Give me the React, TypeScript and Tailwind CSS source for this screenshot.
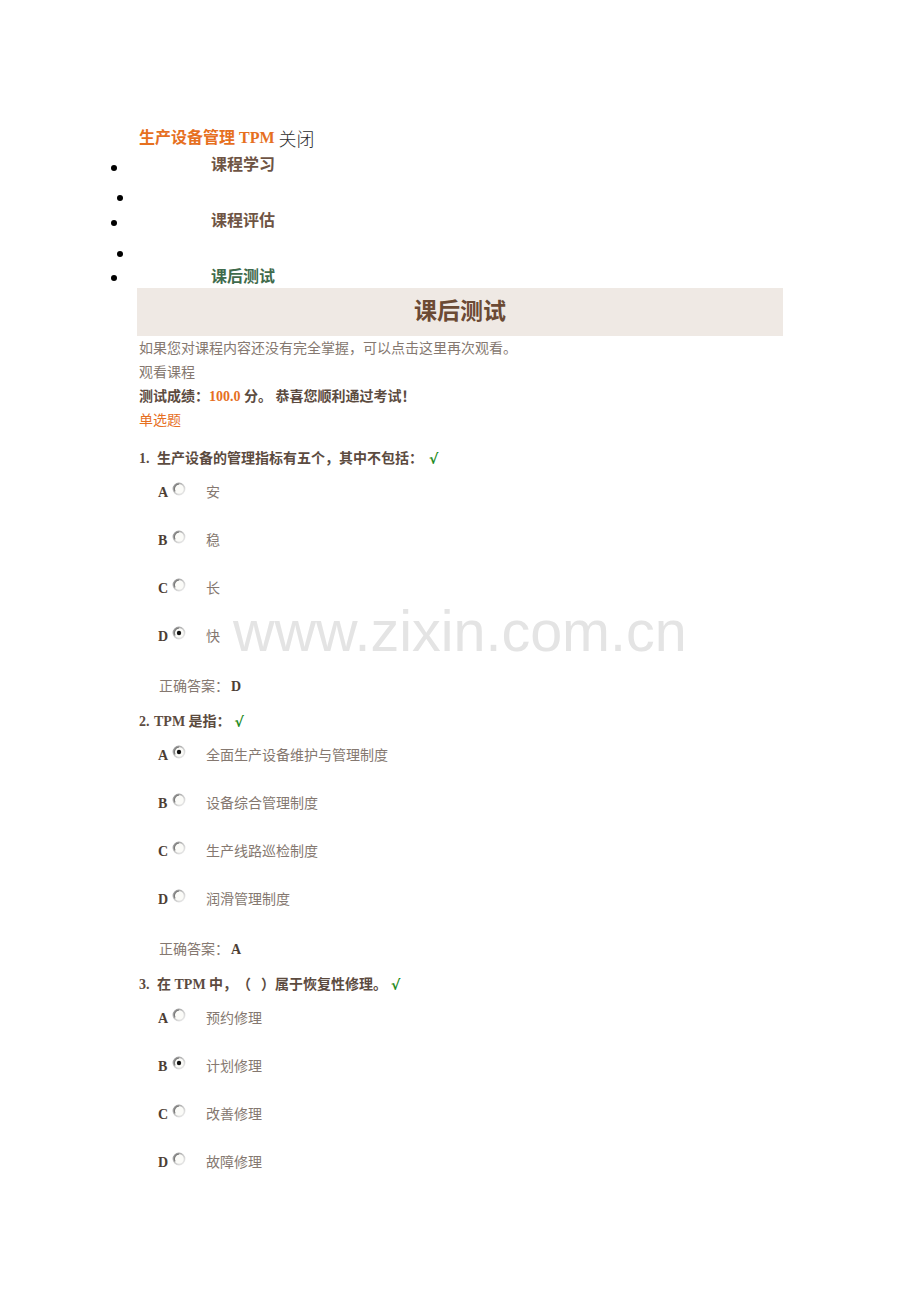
import React from "react";

const serif = { fontFamily: '"Liberation Serif", "Noto Sans CJK SC", serif' };

function Radio({ checked }: { checked?: boolean }) {
  return (
    <svg width="14" height="14" viewBox="0 0 14 14" className="shrink-0">
      <defs>
        <linearGradient id={checked ? "rg1" : "rg0"} x1="0" y1="0" x2="1" y2="1">
          <stop offset="0" stopColor="#8a8a8a" />
          <stop offset="0.5" stopColor="#c8c8c8" />
          <stop offset="1" stopColor="#f0f0f0" />
        </linearGradient>
      </defs>
      <circle cx="7" cy="7" r="5.6" fill="#fbfbf8" stroke={`url(#${checked ? "rg1" : "rg0"})`} strokeWidth="1.6" />
      <path d="M3 9.5 A5 5 0 0 1 7 2" fill="none" stroke="#7a7a7a" strokeWidth="1.2" />
      {checked && <circle cx="7" cy="7" r="2.2" fill="#111" />}
    </svg>
  );
}

type Q = { num: string; numW: string; text: React.ReactNode; options: string[]; checked: number; answer?: string; checkMl: string };

const questions: Q[] = [
  {
    num: "1. ",
    numW: "w-[18px]",
    text: "生产设备的管理指标有五个，其中不包括：",
    options: ["安", "稳", "长", "快"],
    checked: 3,
    answer: "D",
    checkMl: "ml-[6px]",
  },
  {
    num: "2.",
    numW: "w-[15px]",
    text: "TPM 是指：",
    options: ["全面生产设备维护与管理制度", "设备综合管理制度", "生产线路巡检制度", "润滑管理制度"],
    checked: 0,
    answer: "A",
    checkMl: "ml-[4px]",
  },
  {
    num: "3. ",
    numW: "w-[18px]",
    text: (
      <>
        在 TPM 中，<span className="inline-block w-[14px]">（</span>
        <span className="inline-block w-[10px]" />
        <span className="inline-block w-[14px]">）</span>属于恢复性修理。
      </>
    ),
    options: ["预约修理", "计划修理", "改善修理", "故障修理"],
    checked: 1,
    checkMl: "ml-[4px]",
  },
];

const letters = ["A", "B", "C", "D"];

function Question({ q, first }: { q: Q; first?: boolean }) {
  return (
    <div className={first ? "mt-[14px]" : "mt-[11px]"}>
      <div className="h-[24px] leading-[24px] text-[14px] font-bold text-[#5c4b3f] flex items-center">
        <span className={q.numW}>{q.num}</span>
        <span>{q.text}</span>
        <span
          className={`${q.checkMl} text-[#1f8c24] font-bold text-[14px]`}
          style={{ fontFamily: '"DejaVu Sans", sans-serif' }}
        >
          √
        </span>
      </div>
      <div className="mt-[9px] flex flex-col gap-[24px] pl-[19px]">
        {q.options.map((o, i) => (
          <div key={i} className="h-[24px] flex items-center text-[14px]">
            <span className="w-[14px] font-bold text-[#4d3e34] text-[14px]">{letters[i]}</span>
            <span className="-mt-[6px]">
              <Radio checked={q.checked === i} />
            </span>
            <span className="ml-[20px] text-[#857870]">{o}</span>
          </div>
        ))}
      </div>
      {q.answer && (
        <div className="mt-[27px] h-[24px] leading-[24px] pl-[20px] text-[14px] text-[#857870]">
          正确答案：<span className="ml-[2px] font-bold text-[#4d3e34] text-[14px]">{q.answer}</span>
        </div>
      )}
    </div>
  );
}

export default function App() {
  return (
    <div className="relative w-[920px] h-[1302px] bg-white overflow-hidden" style={serif}>
      <div className="pt-[128px]">
        <div className="pl-[139px] h-[20px] leading-[20px] flex items-end">
          <span className="text-[16px] font-bold text-[#e6701f]">生产设备管理 TPM</span>
          <span className="ml-[4px] text-[18px] text-[#2e2e2e]" style={{ fontFamily: '"Noto Sans CJK SC", sans-serif', fontWeight: 300 }}>
            关闭
          </span>
        </div>

        <div className="mt-[5px] h-[24px] flex items-center">
          <span className="ml-[111px] mt-[5px] w-[6px] h-[6px] rounded-full bg-black" />
          <span className="ml-[94px] text-[16px] font-bold text-[#6e5444]">课程学习</span>
        </div>
        <div className="mt-[9px] h-[23px] flex items-center">
          <span className="ml-[117px] w-[6px] h-[6px] rounded-full bg-black" />
        </div>
        <div className="h-[24px] flex items-center">
          <span className="ml-[111px] mt-[4px] w-[6px] h-[6px] rounded-full bg-black" />
          <span className="ml-[94px] text-[16px] font-bold text-[#6e5444]">课程评估</span>
        </div>
        <div className="mt-[9px] h-[24px] flex items-center">
          <span className="ml-[117px] w-[6px] h-[6px] rounded-full bg-black" />
        </div>
        <div className="h-[22px] flex items-center">
          <span className="ml-[111px] mt-[2px] w-[6px] h-[6px] rounded-full bg-black" />
          <span className="ml-[94px] text-[16px] font-bold text-[#3f6b4c]">课后测试</span>
        </div>

        <div className="ml-[137px] w-[646px] h-[48px] bg-[#efe9e4] flex items-center justify-center">
          <span className="text-[23px] font-bold text-[#6b4a34]">课后测试</span>
        </div>

        <div className="pl-[139px] mt-[1px] text-[14px]">
          <div className="h-[24px] leading-[24px] text-[#857870]">如果您对课程内容还没有完全掌握，可以点击这里再次观看。</div>
          <div className="h-[24px] leading-[24px] text-[#857870]">观看课程</div>
          <div className="h-[24px] leading-[24px] font-bold text-[#5c4b3f]">
            测试成绩：<span className="text-[#e6701f]">100.0</span> 分。 恭喜您顺利通过考试！
          </div>
          <div className="h-[24px] leading-[24px] text-[#e6701f]">单选题</div>

          {questions.map((q, i) => (
            <Question key={i} q={q} first={i === 0} />
          ))}
        </div>
      </div>

      <div
        className="absolute left-[233px] top-[596px] text-[57.5px] leading-[70px] text-[#e4e4e4] pointer-events-none select-none"
        style={{ fontFamily: '"Liberation Sans", Arial, sans-serif' }}
      >
        www.zixin.com.cn
      </div>
    </div>
  );
}
